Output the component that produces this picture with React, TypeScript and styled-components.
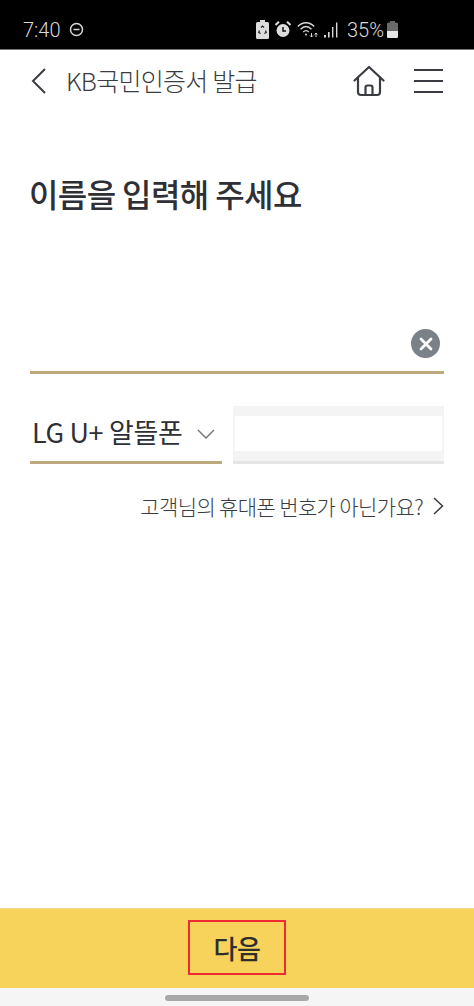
import React from "react";
import styled, { createGlobalStyle } from "styled-components";

const Global = createGlobalStyle`
  html, body { margin: 0; padding: 0; background: #fff; }
  * { box-sizing: border-box; }
  body { font-family: "Noto Sans CJK KR", "Noto Sans", sans-serif; }
`;

const Page = styled.div`
  width: 474px; height: 1006px; display: flex; flex-direction: column; background: #fff; overflow: hidden;
`;
const StatusBar = styled.div`
  height: 50px; background: #000; border-bottom: 1px solid #777; display: flex; align-items: center;
  justify-content: space-between; padding: 10px 76px 0 23px; color: #d8d8d8;
  font-family: Roboto, sans-serif; font-weight: 300;
`;
const StatusGroup = styled.div`
  display: flex; align-items: center; gap: ${(p: { $gap: number }) => p.$gap}px; font-size: 20px; line-height: 20px;
`;
const Header = styled.header`
  height: 62px; display: flex; align-items: center; padding: 0 31px 0 30px;
`;
const Title = styled.h1`
  margin: 0 0 2px 19px; flex: 1; font-size: 25px; font-weight: 300; color: #3a3c42; letter-spacing: -0.75px; line-height: 1;
`;
const Spacer = styled.span`
  width: 29px;
`;
const Main = styled.main`
  flex: 1; padding: 0 30px; display: flex; flex-direction: column;
`;
const Heading = styled.h2`
  margin: 61px 0 0 -1px; font-size: 32px; line-height: 40px; font-weight: 500; color: #2e3036; letter-spacing: -0.6px;
`;
const NameField = styled.div`
  margin-top: 102px; height: 59px; border-bottom: 3px solid #bda97e; display: flex; justify-content: flex-end; align-items: flex-start;
  padding: 14px 4px 0 0;
`;
const ClearButton = styled.div`
  width: 29px; height: 29px; border-radius: 50%; background: #7b8189; display: flex; align-items: center; justify-content: center;
`;
const PhoneRow = styled.div`
  margin-top: 32px; display: flex; gap: 11px; height: 58px;
`;
const Carrier = styled.div`
  width: 192px; border-bottom: 3px solid #bda97e; display: flex; align-items: center; justify-content: space-between;
  padding: 0 7px 0 2px; color: #2e3036; font-size: 27px; font-weight: 400; letter-spacing: -0.35px;
`;
const CarrierLabel = styled.span`
  line-height: 1; margin-bottom: 4px;
`;
const NumberField = styled.div`
  flex: 1; background: #f4f4f4; border-bottom: 3px solid #e4e5e7; padding: 10px 2px 10px 2px; display: flex;
`;
const NumberInner = styled.div`
  flex: 1; background: #fff;
`;
const HelpLink = styled.div`
  margin-top: 27px; display: flex; justify-content: flex-end; align-items: center; gap: 10px;
  font-size: 21px; line-height: 30px; font-weight: 300; color: #3a3c42; letter-spacing: -0.62px;
`;
const BottomBar = styled.div`
  height: 80px; background: #f8d35c; border-top: 1px solid #f3dc8c; display: flex; align-items: center; justify-content: center;
  padding-bottom: 2px;
`;
const NextLabel = styled.div`
  width: 98px; height: 55px; border: 2px solid #ee2b32; display: flex; align-items: center; justify-content: center;
  font-size: 26px; font-weight: 500; color: #2e2e2c; letter-spacing: -0.4px; line-height: 1;
`;
const GestureBar = styled.div`
  height: 18px; background: #f5f5f5; display: flex; justify-content: center; align-items: center; padding-top: 2px;
`;
const Pill = styled.div`
  width: 144px; height: 6px; border-radius: 3px; background: #a9a9a9;
`;
const PercentGroup = styled.span`
  display: flex; align-items: center; gap: 3px; margin-left: 2px;
`;

const DndIcon = () => (
  <svg width="15" height="15" viewBox="0 0 15 15" fill="none" stroke="#d8d8d8" strokeWidth="1.5">
    <circle cx="7.5" cy="7.5" r="6" />
    <path d="M4.5 7.5h6" />
  </svg>
);
const RecycleIcon = () => (
  <svg width="13" height="19" viewBox="0 0 13 19">
    <path d="M4 0h5v2h2.500a1.500 1.500 0 0 1 1.500 1.500V17.500a1.500 1.500 0 0 1-1.500 1.500h-10A1.500 1.500 0 0 1 0 17.500V3.500A1.500 1.500 0 0 1 1.500 2H4z" fill="#dcdcdc" />
    <path d="M5 7.500l1.500-1.500 1.500 1.500M9.500 10.500l.8 2-2 1M3.500 10.500l-.8 2 2 1" fill="none" stroke="#222" strokeWidth="1.200" />
  </svg>
);
const AlarmIcon = () => (
  <svg width="16" height="17" viewBox="0 0 16 17">
    <circle cx="8" cy="9.500" r="6.500" fill="#dcdcdc" />
    <path d="M8 6v4h3" fill="none" stroke="#111" strokeWidth="1.500" />
    <path d="M0.500 4L4 0.800M15.500 4L12 0.800" stroke="#dcdcdc" strokeWidth="2" />
  </svg>
);
const WifiIcon = () => (
  <svg width="21" height="17" viewBox="0 0 21 17" fill="none" stroke="#d8d8d8" strokeWidth="1.300">
    <path d="M0.800 5.500C5.500 0.500 12.500 0.500 17.200 5.500" />
    <path d="M3.500 8.300C7 4.800 11 4.800 14.500 8.300" />
    <path d="M6.200 11C8 9.300 10 9.300 11.800 11" />
    <circle cx="9" cy="13.500" r="1" fill="#d8d8d8" stroke="none" />
    <path d="M14.500 12v4M13 14.500l1.500 1.500 1.500-1.500M19 16v-4M17.500 13.500l1.500-1.500 1.500 1.500" strokeWidth="1" />
  </svg>
);
const SignalIcon = () => (
  <svg width="15" height="16" viewBox="0 0 15 16" fill="#d8d8d8">
    <rect x="0" y="13" width="2" height="2.500" />
    <rect x="4" y="10" width="1.600" height="5.500" />
    <rect x="8" y="5" width="1.400" height="10.500" />
    <rect x="12" y="0.500" width="1.400" height="15" />
  </svg>
);
const BatteryIcon = () => (
  <svg width="11" height="17" viewBox="0 0 11 17">
    <path d="M3 0h5v1.500h1.500A1.500 1.500 0 0 1 11 3v12.500a1.500 1.500 0 0 1-1.500 1.500h-8A1.500 1.500 0 0 1 0 15.500V3a1.500 1.500 0 0 1 1.500-1.500H3z" fill="#6a6a6a" />
    <path d="M0 10h11v5.500a1.500 1.500 0 0 1-1.500 1.500h-8A1.500 1.500 0 0 1 0 15.500z" fill="#e6e6e6" />
  </svg>
);
const BackIcon = () => (
  <svg width="17" height="28" viewBox="0 0 17 28" fill="none" stroke="#3a3c42" strokeWidth="2">
    <path d="M15 2L3 14l12 12" />
  </svg>
);
const HomeIcon = () => (
  <svg width="32" height="32" viewBox="0 0 32 32" fill="none" stroke="#3a3c42" strokeWidth="2.200" strokeLinejoin="round" strokeLinecap="round">
    <path d="M1.500 15.500L16 2l14.500 13.500" />
    <path d="M5 12.500V27a3 3 0 0 0 3 3h16a3 3 0 0 0 3-3V12.500" />
    <path d="M12.500 30v-7.500a2 2 0 0 1 2-2h3a2 2 0 0 1 2 2V30" />
  </svg>
);
const MenuIcon = () => (
  <svg width="29" height="26" viewBox="0 0 29 26" stroke="#3a3c42" strokeWidth="2">
    <path d="M0 2h29M0 13h29M0 24h29" />
  </svg>
);
const CloseIcon = () => (
  <svg width="14" height="14" viewBox="0 0 14 14" stroke="#fff" strokeWidth="2.800" strokeLinecap="round">
    <path d="M2 2l10 10M12 2L2 12" />
  </svg>
);
const ChevronDown = () => (
  <svg width="18" height="10" viewBox="0 0 18 10" fill="none" stroke="#6d7076" strokeWidth="1.300">
    <path d="M1 1l8 8 8-8" />
  </svg>
);
const ChevronRight = () => (
  <svg width="11" height="18" viewBox="0 0 11 18" fill="none" stroke="#3a3c42" strokeWidth="1.500">
    <path d="M1 1l8.500 8L1 17" />
  </svg>
);

export default function App() {
  return (
    <Page>
      <Global />
      <StatusBar>
        <StatusGroup $gap={9}>
          <span>7:40</span>
          <DndIcon />
        </StatusGroup>
        <StatusGroup $gap={6}>
          <RecycleIcon />
          <AlarmIcon />
          <WifiIcon />
          <SignalIcon />
          <PercentGroup>
            <span>35%</span>
            <BatteryIcon />
          </PercentGroup>
        </StatusGroup>
      </StatusBar>
      <Header>
        <BackIcon />
        <Title>KB국민인증서 발급</Title>
        <HomeIcon />
        <Spacer />
        <MenuIcon />
      </Header>
      <Main>
        <Heading>이름을 입력해 주세요</Heading>
        <NameField>
          <ClearButton>
            <CloseIcon />
          </ClearButton>
        </NameField>
        <PhoneRow>
          <Carrier>
            <CarrierLabel>LG U+ 알뜰폰</CarrierLabel>
            <ChevronDown />
          </Carrier>
          <NumberField>
            <NumberInner />
          </NumberField>
        </PhoneRow>
        <HelpLink>
          <span>고객님의 휴대폰 번호가 아닌가요?</span>
          <ChevronRight />
        </HelpLink>
      </Main>
      <BottomBar>
        <NextLabel>다음</NextLabel>
      </BottomBar>
      <GestureBar>
        <Pill />
      </GestureBar>
    </Page>
  );
}
